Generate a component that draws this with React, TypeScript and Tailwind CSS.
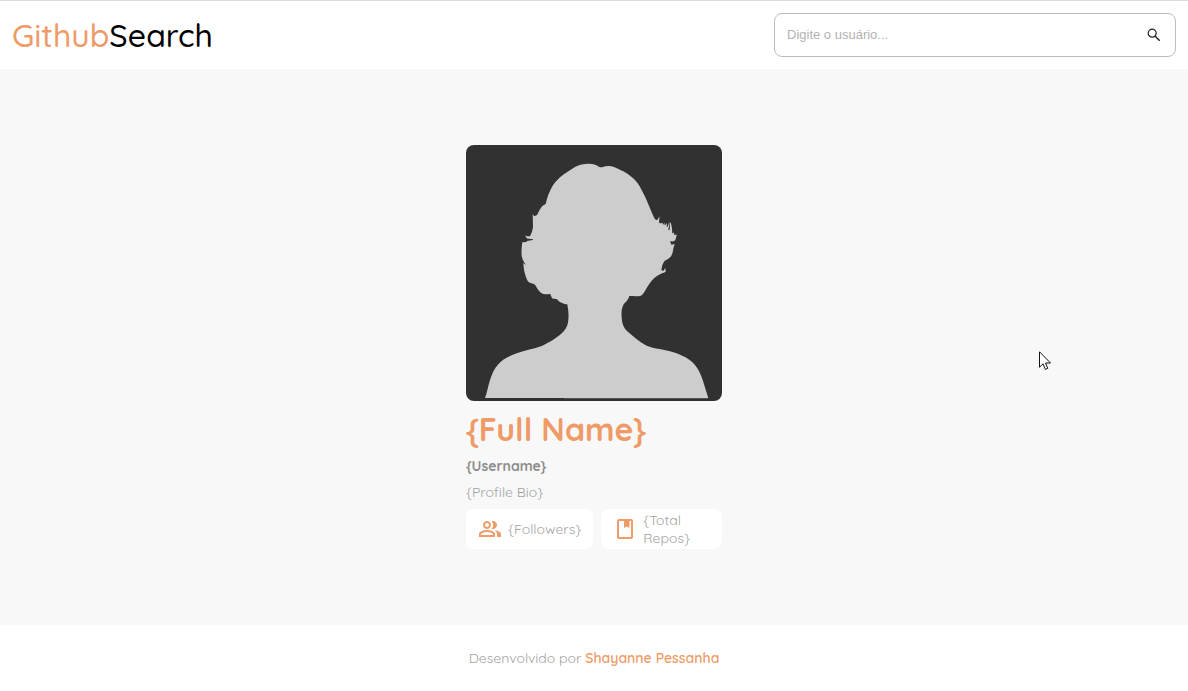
import { useState } from "react";
import type { FormEvent } from "react";
import { MdOutlinePeopleAlt } from "react-icons/md";

function SearchIcon() {
  return (
    <svg viewBox="0 0 18 18" className="h-[18px] w-[18px]" fill="none" stroke="currentColor" aria-hidden="true">
      <circle cx="7.2" cy="7.2" r="4" strokeWidth="1.2" />
      <path d="M10.2 10.2l4.5 4.5" strokeWidth="1.5" />
    </svg>
  );
}

function BookIcon() {
  return (
    <svg viewBox="0 0 24 24" className="h-6 w-6 flex-none text-[#ee9b68]" fill="currentColor" aria-hidden="true">
      <path
        fillRule="evenodd"
        d="M18 2H6c-1.1 0-2 .9-2 2v16c0 1.1.9 2 2 2h12c1.1 0 2-.9 2-2V4c0-1.1-.9-2-2-2zM6 4h5v7l2.7-1.5L16.5 11V4H18v16H6V4z"
      />
    </svg>
  );
}

function Header() {
  const [user, setUser] = useState("");
  const submit = (event: FormEvent) => event.preventDefault();
  return (
    <header className="flex items-center justify-between border-t border-[#dadada] bg-white p-3">
      <h1 className="text-[32px] leading-10 font-medium text-black">
        <span className="text-[#ee9b68]">Github</span>Search
      </h1>
      <form
        onSubmit={submit}
        className="flex h-11 w-full max-w-[402px] items-center rounded-lg border border-[#bdbdbd] px-3"
      >
        <input
          type="text"
          aria-label="Digite o usuário"
          placeholder="Digite o usuário..."
          value={user}
          onChange={(event) => setUser(event.target.value)}
          className="min-w-0 flex-1 bg-transparent font-['Liberation_Sans',Arial,sans-serif] text-[13px] text-[#333] outline-none placeholder:text-[#b2b2b2]"
        />
        <button type="submit" aria-label="Buscar" className="text-[#222]">
          <SearchIcon />
        </button>
      </form>
    </header>
  );
}

function Avatar() {
  return (
    <svg
      viewBox="0 0 256 256"
      role="img"
      aria-label="Avatar"
      className="block aspect-square w-full rounded-lg bg-[#313131]"
    >
      <path
        fill="#cdcdcd"
        d="M19 253C21 248 22 241 24 235C26 229 28 224 32.3 219.3C37 214 43 211 50.7 208.3C59 205 68 204 75.7 201C84 197 92 192 97.3 186.7C101 183 102 179 102.3 175C103 168 102 164 101.3 159.3C99 159 98 159 95.7 157.7C93 157 92 155 90.7 154C89 154 87 154 86 153.3C85 151 85 150 84 148.7C82 149.5 80 149.5 77.3 149C75 148 74 147 72.3 145C70 142 70 140 68 139C66 138 63 138 61.7 136C60 133 59 129 58 125L57.3 118L60 120C58 117 57 116 56.3 113.3C55 110 55.5 103 56.3 97.3L60.5 97L61 96L67 95L67 94.3L61 93.5L59 90.5L61 91.3L64 91.3L66 86.7L67 82L66.7 69.3L68.3 71.3L71 70C73 66 74 64 75.7 61.7C77 60 79 60 79.7 58.7C81 54 82 50 84 46C86 41 89 37 92.3 34C96 30 103 26 109 22C116 18.5 124 18 130 20C133 22 134 22.5 136 22.2C140 21 144 20.5 148 22C151 23 154 25 157.3 26.3C162 29 166 32 169 35C173 39 175 44 177.3 48.3C182 57 185 67 189 74.3L191 75.3L193.6 71.5L193 77L194 78.5L196.5 77.8L197 80L198.5 77.8L198.7 80.7L200.8 78L200.8 82L201.8 81.5L203.3 77L203.2 80L202.2 85.2L203.8 84.5L203.9 77L205 78.5L206 83.5L206.3 88.5L208 87.5L208 89.8L210.8 89.8L209.3 95.3L207 96.6L204 96.3L205.4 99.8L208.7 99L207.3 103.5C207 107 206 111 203.3 113C201 115 199 115 198 116.7C197 119 196 120 196 122L195.3 125L197.5 126L198.2 124.5L199.3 123L199.7 126.7C198 128 196 128 194 129.3C191 131 188 133 185.7 135.7C183 139 181 142 179 146C177 149 176 150.5 174 151C170 151.5 167 151 163.3 151C162 156 159 157 157.3 160C155 165 155.5 169 155.7 173.3C156 179 158 183 160.7 185.7C167 191 173 197 180.7 200.7C188 204 199 204 207.3 207.3C216 210 224 214 229 220C233 225 235 230 236.7 235C238.5 241 240.5 247 242.3 253Z"
      />
      <path fill="#777" d="M98 253h144v.5H98z" />
    </svg>
  );
}

function Profile() {
  return (
    <main className="flex flex-1 items-center justify-center bg-[#f8f8f8] py-[76px]">
      <section className="flex w-64 flex-col">
        <Avatar />
        <h2 className="mt-2 text-[32px] leading-10 font-bold text-[#ee9b68]">{"{Full Name}"}</h2>
        <p className="mt-2 text-sm leading-[18px] font-bold text-[#8c8c8c]">{"{Username}"}</p>
        <p className="mt-2 text-sm leading-[18px] font-normal text-[#a3a3a3]">{"{Profile Bio}"}</p>
        <ul className="mt-2 flex gap-2 text-sm leading-[18px] font-normal text-[#a3a3a3]">
          <li className="flex h-10 flex-none items-center gap-[6px] rounded-lg bg-white px-3">
            <MdOutlinePeopleAlt size={24} className="flex-none text-[#ee9b68]" />
            {"{Followers}"}
          </li>
          <li className="flex h-10 flex-1 items-center gap-[6px] rounded-lg bg-white px-3">
            <BookIcon />
            <span>{"{Total Repos}"}</span>
          </li>
        </ul>
      </section>
    </main>
  );
}

export default function App() {
  return (
    <div className="flex min-h-screen flex-col bg-white font-['Quicksand','Lato',sans-serif]">
      <Header />
      <Profile />
      <footer className="py-6 text-center text-sm leading-[18px] font-normal text-[#a3a3a3]">
        Desenvolvido por{" "}
        <a href="#autora" className="font-semibold text-[#ee9b68]">
          Shayanne Pessanha
        </a>
      </footer>
      <svg
        viewBox="0 0 12 20"
        aria-hidden="true"
        className="pointer-events-none absolute top-[351px] left-[1039px] h-5 w-3"
      >
        <path
          d="M.5.8v15.4l3.6-3.4 2.3 5.6 2.4-1-2.3-5.4h5z"
          fill="#fff"
          stroke="#111"
          strokeWidth="1"
        />
      </svg>
    </div>
  );
}
